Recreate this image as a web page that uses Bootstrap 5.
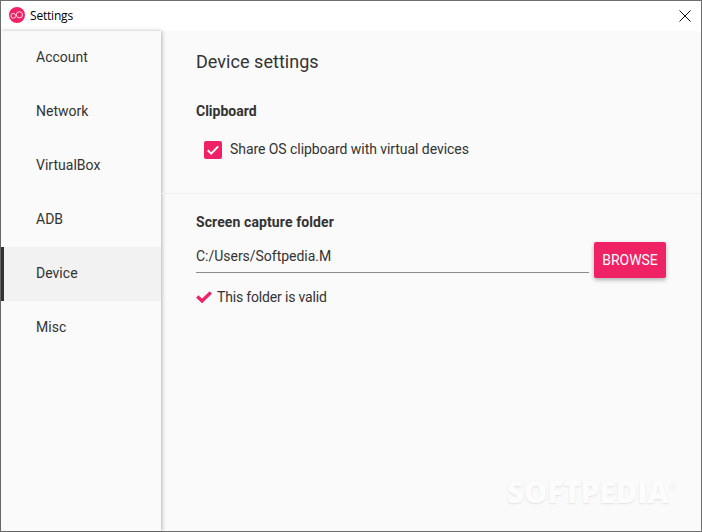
<!DOCTYPE html>
<html lang="en">
<head>
<meta charset="utf-8">
<title>Settings</title>
<link rel="stylesheet" href="https://cdn.jsdelivr.net/npm/bootstrap@5.3.0/dist/css/bootstrap.min.css">
<style>
html,body{height:100%;}
body{margin:0;background:#fafafa;font-family:Roboto,"Liberation Sans",sans-serif;color:#212121;overflow:hidden;}
.app-win{width:702px;height:532px;border:1px solid #6e6e6e;background:#fafafa;}
.title-bar{height:30px;background:#fff;padding-left:8px;}
.app-logo{margin-bottom:2px;}
.title-text{font-family:"Open Sans","Liberation Sans",sans-serif;font-size:12px;letter-spacing:-.2px;color:#000;margin-left:5px;}
.close-x{margin-left:auto;width:33px;text-align:center;line-height:0;}
.main-area{height:500px;}
.side-nav{width:160px;background:#fafafa;box-shadow:1px 0 4px rgba(0,0,0,.28);flex:none;}
.side-item{height:54px;padding:0 0 2px 35px;font-size:14px;letter-spacing:.02px;color:#333;display:flex;align-items:center;}
.side-item.on{background:#f2f2f2;border-left:3px solid #333;padding-left:32px;}
.content-pane{flex:1;position:relative;}
.sec-a{height:163px;border-bottom:1px solid #eee;padding:18px 0 0 35px;}
.sec-b{padding:18px 35px 0 35px;}
.page-head{font-size:18px;line-height:25px;color:#333;letter-spacing:.04px;margin:0 0 27px;font-weight:400;}
.sub-head{font-size:14px;font-weight:700;line-height:20px;color:#333;margin:0;}
.sec-b .sub-head{letter-spacing:.1px;}
.chk-row{margin:18px 0 0 8px;font-size:14px;letter-spacing:-.06px;color:#333;gap:8px;}
.chk-box{width:18px;height:18px;background:#ee2264;border-radius:2px;display:flex;align-items:center;justify-content:center;flex:none;}
.path-field{flex:1;border-bottom:1px solid #8c8c8c;height:31px;font-size:14px;letter-spacing:-.02px;line-height:28px;color:#333;}
.browse-btn{width:72px;height:36px;margin:0 0 0 5px;background:#ee2264;color:#fff;border:0;border-radius:2px;font-size:14px;padding:0;box-shadow:0 2px 4px rgba(0,0,0,.3);}
.browse-btn:hover{background:#ee2264;color:#fff;}
.path-row{margin-top:10px;}
.valid-row{font-size:14px;color:#333;gap:5px;margin-top:9px;line-height:20px;letter-spacing:-.17px;}
.wm-text{position:absolute;right:25px;bottom:22px;font-family:"Open Sans","Liberation Sans",sans-serif;font-weight:800;font-size:30px;line-height:34px;color:#fcfcfc;text-shadow:0 1px 2px rgba(0,0,0,.1);letter-spacing:-.3px;}
.wm-text sup{font-size:9px;font-weight:400;top:-1.6em;}
</style>
</head>
<body>
<div class="app-win d-flex flex-column">
  <div class="title-bar d-flex align-items-center">
    <svg class="app-logo" width="16" height="16" viewBox="0 0 16 16"><circle cx="8" cy="8" r="8" fill="#ee2264"/><circle cx="4.300" cy="8.800" r="2.400" fill="none" stroke="#fff" stroke-opacity=".8" stroke-width="1"/><circle cx="10.400" cy="7.800" r="3.100" fill="none" stroke="#fff" stroke-opacity=".8" stroke-width="1"/></svg>
    <span class="title-text">Settings</span>
    <span class="close-x"><svg width="12" height="12" viewBox="0 0 12 12"><path d="M.5.5l11 11M11.500.5l-11 11" stroke="#111" stroke-width="1" fill="none"/></svg></span>
  </div>
  <div class="main-area d-flex">
    <nav class="side-nav">
      <div class="side-item">Account</div>
      <div class="side-item">Network</div>
      <div class="side-item">VirtualBox</div>
      <div class="side-item">ADB</div>
      <div class="side-item on">Device</div>
      <div class="side-item">Misc</div>
    </nav>
    <div class="content-pane">
      <div class="sec-a">
        <h1 class="page-head">Device settings</h1>
        <h2 class="sub-head">Clipboard</h2>
        <div class="chk-row d-flex align-items-center">
          <span class="chk-box"><svg width="14" height="14" viewBox="0 0 14 14"><path d="M1.800 7.200l3.400 3.400 7-7.200" stroke="#fff" stroke-width="2" fill="none"/></svg></span>
          <span>Share OS clipboard with virtual devices</span>
        </div>
      </div>
      <div class="sec-b">
        <h2 class="sub-head">Screen capture folder</h2>
        <div class="path-row d-flex align-items-start">
          <div class="path-field">C:/Users/Softpedia.M</div>
          <button class="btn browse-btn" type="button">BROWSE</button>
        </div>
        <div class="valid-row d-flex align-items-center">
          <svg width="16" height="14" viewBox="0 0 16 14"><path d="M1.300 6.500l4.700 4.500L14.800 2.500" stroke="#ee2264" stroke-width="3.200" fill="none"/></svg>
          <span>This folder is valid</span>
        </div>
      </div>
      <div class="wm-text">SOFTPEDIA<sup>®</sup></div>
    </div>
  </div>
</div>
</body>
</html>
